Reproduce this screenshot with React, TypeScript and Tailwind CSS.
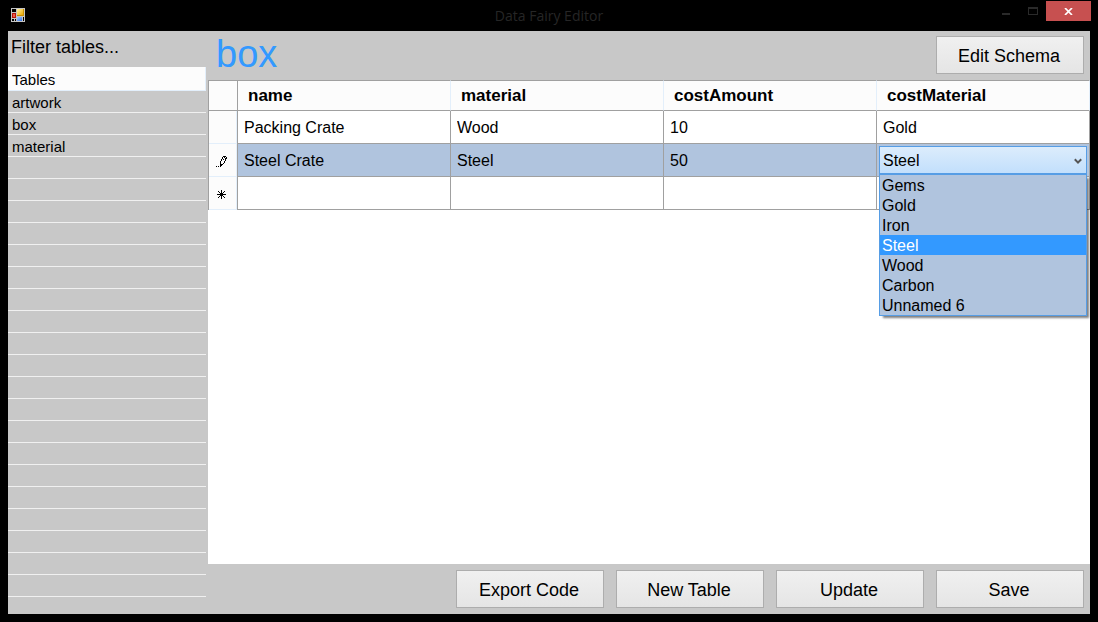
import { useState } from "react";

const tables = ["artwork", "box", "material"];
const emptyRows = Array.from({ length: 20 }, (_, i) => i);
const columns = ["name", "material", "costAmount", "costMaterial"];
const materials = ["Gems", "Gold", "Iron", "Steel", "Wood", "Carbon", "Unnamed 6"];

function AppIcon() {
  return (
    <svg width="14" height="14" viewBox="0 0 14 14" shapeRendering="crispEdges" aria-hidden="true">
      <defs>
        <linearGradient id="gold" x1="0" y1="0" x2="1" y2="1">
          <stop offset="0" stopColor="#fff3a8" />
          <stop offset="1" stopColor="#e9a800" />
        </linearGradient>
        <linearGradient id="sky" x1="0" y1="0" x2="1" y2="1">
          <stop offset="0" stopColor="#a9cbff" />
          <stop offset="1" stopColor="#2f6fe0" />
        </linearGradient>
      </defs>
      <rect width="14" height="14" fill="#c4c4c4" />
      <rect x="1" y="1" width="4" height="3" fill="#000" />
      <rect x="1" y="5" width="4" height="5" fill="#b3150c" />
      <rect x="2" y="6" width="2" height="3" fill="#ee5a4a" />
      <rect x="6" y="1" width="7" height="7" fill="#c98f00" />
      <rect x="6" y="1" width="6" height="6" fill="url(#gold)" />
      <rect x="6" y="9" width="5" height="4" fill="url(#sky)" />
      <rect x="12" y="9" width="1" height="4" fill="#000" />
      <rect x="1" y="11" width="2" height="2" fill="#000" />
      <rect x="4" y="11" width="1" height="2" fill="#000" />
    </svg>
  );
}

function PencilIcon() {
  return (
    <svg width="11" height="11" viewBox="0 0 11 11" shapeRendering="crispEdges" role="img" aria-label="Editing">
      <path
        fill="#000"
        d="M7 0h3v1h-3z M6 1h1v1h-1z M8 1h1v1h-1z M10 1h1v2h-1z M6 2h1v1h-1z M9 2h1v1h-1z M5 3h1v2h-1z M7 3h1v1h-1z M9 3h1v2h-1z M4 5h1v2h-1z M8 5h1v2h-1z M4 7h1v3h-1z M7 7h1v1h-1z M5 8h2v1h-2z M5 9h1v1h-1z M0 10h1v1h-1z M2 10h1v1h-1z M4 10h1v1h-1z"
      />
    </svg>
  );
}

function NewRowIcon() {
  return (
    <svg width="9" height="9" viewBox="0 0 9 9" shapeRendering="crispEdges" role="img" aria-label="New row">
      <path
        fill="#000"
        d="M4 0h1v9h-1z M0 4h9v1h-9z M3 3h3v3h-3z M1 1h1v1h-1z M2 2h1v1h-1z M6 2h1v1h-1z M7 1h1v1h-1z M2 6h1v1h-1z M1 7h1v1h-1z M6 6h1v1h-1z M7 7h1v1h-1z"
      />
    </svg>
  );
}

function PushButton({ children }: { children: string }) {
  return (
    <button
      type="button"
      className="flex h-[38px] w-[148px] items-center justify-center border border-[#adadad] bg-linear-to-b from-[#f0f0f0] to-[#e5e5e5] pt-0.5 pr-0.5 text-lg leading-6"
    >
      {children}
    </button>
  );
}

function RowHeader({ children }: { children?: React.ReactNode }) {
  return (
    <th className="h-[33px] border-x border-[#a0a0a0] p-0">
      <div className="flex h-[33px] items-center justify-center border-r border-b border-[#e3effb] bg-[#fcfcfc] pt-0.5 pr-[3px]">
        {children}
      </div>
    </th>
  );
}

function Cell({ label, value }: { label: string; value: string }) {
  return (
    <td className="border-r border-b border-[#a0a0a0] p-0">
      <input
        aria-label={label}
        defaultValue={value}
        className="block h-8 w-full bg-transparent px-1.5 pt-0.5 text-base leading-6 outline-none"
      />
    </td>
  );
}

function MaterialPicker() {
  const [value, setValue] = useState("Steel");
  return (
    <div className="relative p-0.5">
      <select
        aria-label="costMaterial"
        value={value}
        onChange={(e) => setValue(e.target.value)}
        className="block h-7 w-full appearance-none border border-[#569de5] bg-linear-to-b from-[#dcecfc] to-[#c2dffc] px-[3px] pt-0.5 text-base leading-6 outline-none"
      >
        {materials.map((m) => (
          <option key={m}>{m}</option>
        ))}
      </select>
      <svg
        width="8"
        height="7"
        viewBox="0 0 8 7"
        className="pointer-events-none absolute top-[14px] right-[7px]"
        aria-hidden="true"
      >
        <path d="M0.8 1.2l3.2 3.4l3.2-3.4" fill="none" stroke="#555" strokeWidth="2" />
      </svg>
      <ul
        role="listbox"
        aria-label="Materials"
        className="absolute inset-x-0.5 top-[30px] z-10 border border-[#569de5] bg-[#b0c4de] shadow-[3px_3px_2px_-1px_rgba(0,0,0,0.5)]"
      >
        {materials.map((m) => (
          <li
            key={m}
            role="option"
            aria-selected={m === value}
            onClick={() => setValue(m)}
            className={
              m === value
                ? "h-5 bg-[#3399ff] px-0.5 text-base leading-[22px] text-white"
                : "h-5 px-0.5 text-base leading-[22px]"
            }
          >
            {m}
          </li>
        ))}
      </ul>
    </div>
  );
}

function TitleBar() {
  return (
    <header className="grid h-[31px] grid-cols-[1fr_auto_1fr] items-start bg-black">
      <div className="pt-2 pl-[11px]">
        <AppIcon />
      </div>
      <h1 className="pt-1.5 font-['Open_Sans','Noto_Sans',sans-serif] text-sm leading-5 text-[#262626]">
        Data Fairy Editor
      </h1>
      <div className="flex justify-end pt-px pr-[7px]">
        <button type="button" aria-label="Minimize" className="flex h-5 w-7 items-start justify-center pt-3">
          <span className="h-0.5 w-2 bg-[#2a2a2a]" />
        </button>
        <button type="button" aria-label="Maximize" className="flex h-5 w-[26px] items-start justify-center pt-1.5">
          <span className="h-2 w-2.5 border border-t-2 border-[#2a2a2a]" />
        </button>
        <button
          type="button"
          aria-label="Close"
          className="flex h-5 w-[45px] items-center justify-center bg-[#c75050] pt-px"
        >
          <svg width="9" height="7" viewBox="0 0 9 7" aria-hidden="true">
            <path d="M1 0l7 7M8 0l-7 7" stroke="#fff" strokeWidth="1.7" />
          </svg>
        </button>
      </div>
    </header>
  );
}

function Sidebar() {
  return (
    <aside className="flex w-[200px] shrink-0 flex-col pr-0.5">
      <input
        aria-label="Filter tables"
        placeholder="Filter tables..."
        className="h-9 w-full bg-transparent px-[3px] pb-1 text-lg leading-6 outline-none placeholder:text-black placeholder:opacity-100"
      />
      <table className="w-full table-fixed border-separate border-spacing-0 text-[15px] leading-5">
        <thead>
          <tr>
            <th className="h-6 border-r border-b border-[#e3effb] bg-[#fcfcfc] px-1 pt-0.5 pb-0 text-left font-normal">
              Tables
            </th>
          </tr>
        </thead>
        <tbody>
          {tables.map((name) => (
            <tr key={name}>
              <td className="h-[22px] border-b border-[#f0f0f0] px-1 pt-[3px] pb-0">
                <button type="button" className="block w-full text-left leading-[18px]">
                  {name}
                </button>
              </td>
            </tr>
          ))}
          {emptyRows.map((i) => (
            <tr key={i}>
              <td className="h-[22px] border-b border-[#f0f0f0] p-0" />
            </tr>
          ))}
        </tbody>
      </table>
    </aside>
  );
}

export default function App() {
  return (
    <div className="flex min-h-screen flex-col bg-black font-['Liberation_Sans',Arial,sans-serif] text-black">
      <TitleBar />
      <div className="mx-2 mb-2 flex flex-1 bg-[#c8c8c8]">
        <Sidebar />
        <main className="flex min-w-0 flex-1 flex-col">
          <div className="flex h-[49px] items-start justify-between pt-[5px] pr-1.5 pl-2">
            <h2 className="text-[38px] leading-9 text-[#3399ff]">box</h2>
            <PushButton>Edit Schema</PushButton>
          </div>
          <div className="flex-1 bg-white">
            <table className="w-full table-fixed border-separate border-spacing-0">
              <thead>
                <tr>
                  <th className="h-[31px] w-[30px] border border-[#a0a0a0] bg-[#fcfcfc] p-0" />
                  {columns.map((name) => (
                    <th
                      key={name}
                      className="h-[31px] border-y border-r border-y-[#a0a0a0] border-r-[#e3effb] bg-[#fcfcfc] px-2.5 py-0 text-left text-[17px] leading-6 font-bold"
                    >
                      {name}
                    </th>
                  ))}
                </tr>
              </thead>
              <tbody>
                <tr className="bg-white">
                  <RowHeader />
                  <Cell label="name" value="Packing Crate" />
                  <Cell label="material" value="Wood" />
                  <Cell label="costAmount" value="10" />
                  <Cell label="costMaterial" value="Gold" />
                </tr>
                <tr className="bg-[#b0c4de]">
                  <RowHeader>
                    <PencilIcon />
                  </RowHeader>
                  <Cell label="name" value="Steel Crate" />
                  <Cell label="material" value="Steel" />
                  <Cell label="costAmount" value="50" />
                  <td className="border-r border-b border-[#a0a0a0] p-0">
                    <MaterialPicker />
                  </td>
                </tr>
                <tr className="bg-white">
                  <RowHeader>
                    <NewRowIcon />
                  </RowHeader>
                  <Cell label="name" value="" />
                  <Cell label="material" value="" />
                  <Cell label="costAmount" value="" />
                  <Cell label="costMaterial" value="" />
                </tr>
              </tbody>
            </table>
          </div>
          <div className="flex h-[50px] items-start justify-end gap-3 pt-1.5 pr-1.5">
            <PushButton>Export Code</PushButton>
            <PushButton>New Table</PushButton>
            <PushButton>Update</PushButton>
            <PushButton>Save</PushButton>
          </div>
        </main>
      </div>
    </div>
  );
}
